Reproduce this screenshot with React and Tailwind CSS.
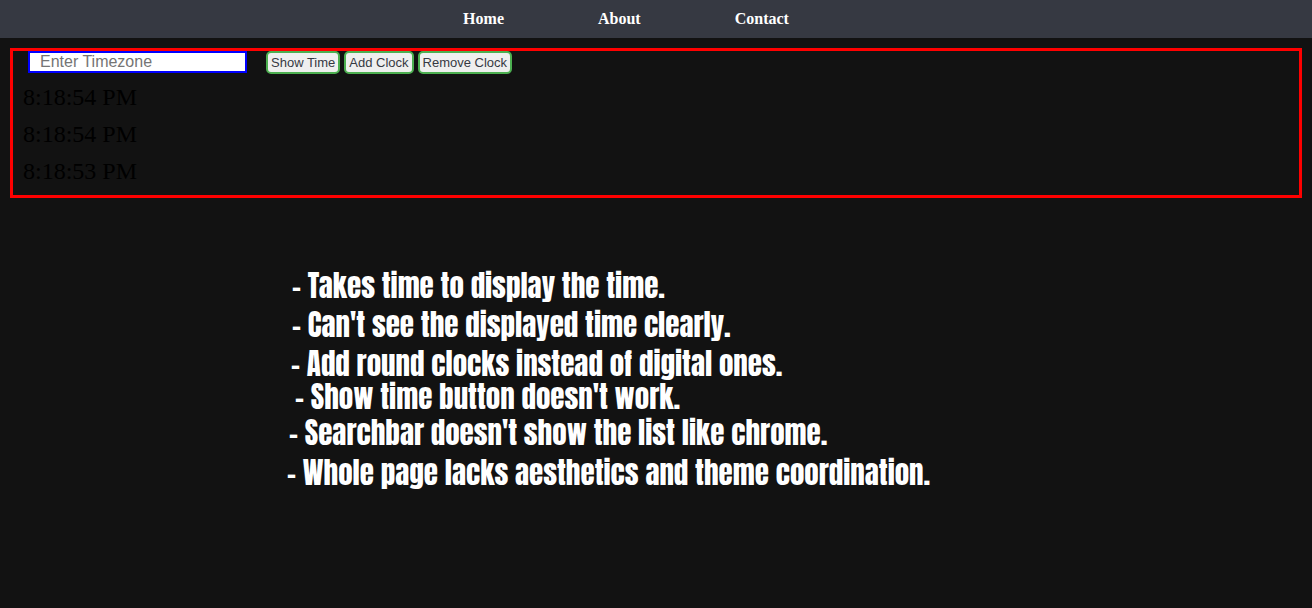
const links = ["Home", "About", "Contact"];
const actions = ["Show Time", "Add Clock", "Remove Clock"];
const clocks = ["8:18:54 PM", "8:18:54 PM", "8:18:53 PM"];

const notes = [
  { text: "Takes time to display the time.", place: "ml-[5px]" },
  { text: "Can't see the displayed time clearly.", place: "ml-[5px] mt-[7px]" },
  { text: "Add round clocks instead of digital ones.", place: "ml-1 mt-[7px]" },
  { text: "Show time button doesn't work.", place: "ml-2 mt-px" },
  { text: "Searchbar doesn't show the list like chrome.", place: "ml-0.5 mt-1" },
  { text: "Whole page lacks aesthetics and theme coordination.", place: "mt-2" },
];

export default function App() {
  return (
    <div className="min-h-screen bg-[#121212] font-['Liberation_Serif',serif]">
      <nav className="flex h-[38px] items-center justify-center gap-[94px] bg-[#363942] pr-[60px]">
        {links.map((link) => (
          <a key={link} href={`#${link.toLowerCase()}`} className="text-base font-bold text-white">
            {link}
          </a>
        ))}
      </nav>

      <main>
        <section className="m-[10px] border-3 border-[#ff0000] pb-[5px]">
          <form className="flex items-start gap-1 pl-[15px] font-['Liberation_Sans',sans-serif]" onSubmit={(e) => e.preventDefault()}>
            <input
              type="text"
              aria-label="Timezone"
              placeholder="Enter Timezone"
              className="mr-[15px] h-[22px] w-[219px] border-2 border-[#0000ff] bg-white px-[10px] text-base leading-4 text-black outline-none placeholder:text-[#757575]"
            />
            {actions.map((action) => (
              <button
                key={action}
                type="button"
                className="h-[23px] whitespace-nowrap rounded-[5px] border-2 border-[#4caf50] bg-[#efefef] px-[3px] text-[13px] leading-4 text-[#363942]"
              >
                {action}
              </button>
            ))}
          </form>
          <div className="mt-[5px] pl-[10px] text-2xl text-black">
            {clocks.map((time, i) => (
              <p key={i} className="leading-[37px]">
                {time}
              </p>
            ))}
          </div>
        </section>

        <ul className="mt-[72px] pl-[287px] font-['Anton','Roboto_Condensed','Roboto',sans-serif] text-[29px] font-normal leading-8 text-white">
          {notes.map((note) => (
            <li key={note.text} className={note.place}>
              - {note.text}
            </li>
          ))}
        </ul>
      </main>
    </div>
  );
}
